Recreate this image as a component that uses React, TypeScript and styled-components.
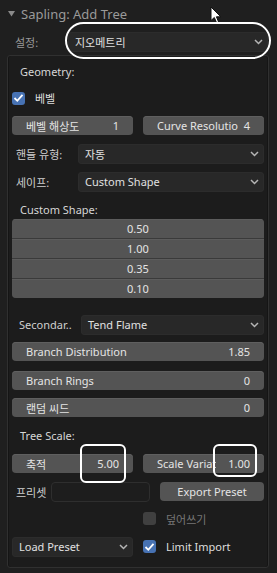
import React from 'react';
import styled, { createGlobalStyle } from 'styled-components';

const GlobalStyle = createGlobalStyle`
  html, body {
    margin: 0;
    padding: 0;
    background: #1d1d1d;
  }
  body {
    font-family: 'Noto Sans', 'Noto Sans CJK KR', sans-serif;
    font-size: 11px;
    color: #d9d9d9;
  }
`;

const Panel = styled.div`
  position: relative;
  width: 277px;
  height: 573px;
  background: #1f1f1f;
  overflow: hidden;
`;

const Header = styled.div`
  align-items: center;
  color: #9a9a9a;
  display: flex;
  font-size: 13px;
  gap: 6px;
  height: 27px;
  padding-left: 8px;
`;

const Cursor = styled.svg`
  left: 210px;
  position: absolute;
  top: 6px;
`;

const SettingsRow = styled.div`
  align-items: center;
  display: flex;
  height: 20px;
  margin-top: 5px;
  padding-right: 9px;
`;

const SettingsLabel = styled.div`
  color: #9a9a9a;
  padding-left: 15px;
  width: 53px;
`;

const Annotated = styled.div`
  flex: 1;
  position: relative;
`;

const Ellipse = styled.div`
  border: 2px solid #fff;
  border-radius: 19px;
  bottom: -7px;
  left: -3px;
  position: absolute;
  right: -3px;
  top: -10px;
  pointer-events: none;
`;

const Box = styled.div`
  background: #1c1c1c;
  border: 1px solid #303030;
  border-radius: 3px;
  box-shadow: inset 1px 0 0 #151515, inset -1px 0 0 #151515;
  display: flex;
  flex-direction: column;
  height: 506px;
  margin: 3px 8px 0 7px;
  padding: 5px 4px 0 4px;
`;

const SectionLabel = styled.div<{ $top?: number }>`
  align-items: center;
  color: #d6d6d6;
  display: flex;
  height: 20px;
  margin-top: ${(p) => p.$top ?? 0}px;
  padding-left: 8px;
`;

const Row = styled.div<{ $top?: number }>`
  align-items: center;
  display: flex;
  gap: 10px;
  height: 19px;
  margin-top: ${(p) => p.$top ?? 0}px;
`;

const CheckRow = styled.div<{ $top?: number; $muted?: boolean }>`
  align-items: center;
  color: ${(p) => (p.$muted ? '#777' : '#dedede')};
  display: flex;
  gap: 10px;
  height: 20px;
  margin-top: ${(p) => p.$top ?? 0}px;
`;

const Check = styled.div<{ $on: boolean }>`
  align-items: center;
  background: ${(p) => (p.$on ? '#4772b3' : '#4a4a4a')};
  border-radius: 3px;
  display: flex;
  height: 13px;
  justify-content: center;
  opacity: ${(p) => (p.$on ? 1 : 0.8)};
  width: 13px;
`;

const NumField = styled.div`
  align-items: center;
  background: #545454;
  border-radius: 4px;
  box-shadow: inset 0 1px 0 #5f5f5f;
  color: #e4e4e4;
  display: flex;
  flex: 1;
  gap: 4px;
  height: 19px;
  justify-content: space-between;
  min-width: 0;
  padding: 0 14px;
  position: relative;
  white-space: nowrap;
`;

const FieldText = styled.span`
  overflow: hidden;
`;

const Mark = styled.div<{ $w: number; $bottom: number }>`
  border: 2px solid #fff;
  border-radius: 6px;
  bottom: ${(p) => p.$bottom}px;
  pointer-events: none;
  position: absolute;
  right: 7px;
  top: -10px;
  width: ${(p) => p.$w}px;
`;

const PropLabel = styled.div<{ $w?: number; $pad?: number }>`
  color: #cfcfcf;
  flex-shrink: 0;
  padding-left: ${(p) => p.$pad ?? 4}px;
  white-space: nowrap;
  width: ${(p) => p.$w ?? 52}px;
`;

const Dropdown = styled.div`
  align-items: center;
  background: #282828;
  border-radius: 4px;
  box-shadow: inset 0 0 0 1px #2c2c2c;
  color: #e0e0e0;
  display: flex;
  flex: 1;
  height: 20px;
  justify-content: space-between;
  padding: 0 5px 0 7px;
`;

const Stack = styled.div`
  border-radius: 4px;
  display: flex;
  flex-direction: column;
  gap: 1px;
  background: #3a3a3a;
  overflow: hidden;
`;

const StackCell = styled.div`
  align-items: center;
  background: #545454;
  box-shadow: inset 0 1px 0 #5c5c5c;
  color: #e4e4e4;
  display: flex;
  height: 19px;
  justify-content: center;
`;

const PresetRow = styled.div`
  align-items: center;
  display: flex;
  height: 19px;
  margin-top: 9px;
`;

const TextField = styled.div`
  background: #1d1d1d;
  border: 1px solid #2e2e2e;
  border-radius: 4px;
  height: 18px;
  width: 97px;
`;

const Button = styled.div`
  align-items: center;
  background: #545454;
  border-radius: 4px;
  color: #e4e4e4;
  display: flex;
  height: 19px;
  justify-content: center;
  margin-left: auto;
  width: 104px;
`;

const Half = styled.div`
  display: flex;
  flex: 1;
`;

const Chevron = () => (
  <svg width="9" height="6" viewBox="0 0 9 6">
    <path d="M1 1 L4.5 4.5 L8 1" fill="none" stroke="#b5b5b5" strokeWidth="1.5" />
  </svg>
);

const Tick = () => (
  <svg width="11" height="10" viewBox="0 0 11 10">
    <path d="M1.5 5 L4.3 7.8 L9.5 1.8" fill="none" stroke="#fff" strokeWidth="1.8" />
  </svg>
);

const App: React.FC = () => (
  <>
    <GlobalStyle />
    <Panel>
      <Header>
        <svg width="7" height="6" viewBox="0 0 7 6">
          <path d="M0 0 H7 L3.5 5.5 Z" fill="#8a8a8a" />
        </svg>
        <span>Sapling: Add Tree</span>
      </Header>
      <Cursor width="12" height="18" viewBox="0 0 12 18">
        <path d="M1 1 L1 14.5 L4.3 11.5 L6.6 16.8 L8.6 15.9 L6.4 10.8 L10.8 10.8 Z" fill="#fff" stroke="#111" strokeWidth="1" />
      </Cursor>

      <SettingsRow>
        <SettingsLabel>설정:</SettingsLabel>
        <Annotated>
          <Dropdown>
            <span>지오메트리</span>
            <Chevron />
          </Dropdown>
          <Ellipse />
        </Annotated>
      </SettingsRow>

      <Box>
        <SectionLabel>Geometry:</SectionLabel>
        <CheckRow $top={7}>
          <Check $on>
            <Tick />
          </Check>
          <span>베벨</span>
        </CheckRow>
        <Row $top={8}>
          <NumField>
            <FieldText>베벨 해상도</FieldText>
            <span>1</span>
          </NumField>
          <NumField>
            <FieldText>Curve Resolutio</FieldText>
            <span>4</span>
          </NumField>
        </Row>
        <Row $top={9}>
          <PropLabel>핸들 유형:</PropLabel>
          <Dropdown>
            <span>자동</span>
            <Chevron />
          </Dropdown>
        </Row>
        <Row $top={9}>
          <PropLabel>세이프:</PropLabel>
          <Dropdown>
            <span>Custom Shape</span>
            <Chevron />
          </Dropdown>
        </Row>
        <SectionLabel $top={8}>Custom Shape:</SectionLabel>
        <Stack>
          <StackCell>0.50</StackCell>
          <StackCell>1.00</StackCell>
          <StackCell>0.35</StackCell>
          <StackCell>0.10</StackCell>
        </Stack>
        <Row $top={17}>
          <PropLabel $pad={7}>Secondar..</PropLabel>
          <Dropdown>
            <span>Tend Flame</span>
            <Chevron />
          </Dropdown>
        </Row>
        <Row $top={8}>
          <NumField>
            <span>Branch Distribution</span>
            <span>1.85</span>
          </NumField>
        </Row>
        <Row $top={10}>
          <NumField>
            <span>Branch Rings</span>
            <span>0</span>
          </NumField>
        </Row>
        <Row $top={8}>
          <NumField>
            <span>랜덤 씨드</span>
            <span>0</span>
          </NumField>
        </Row>
        <SectionLabel $top={8}>Tree Scale:</SectionLabel>
        <Row $top={9}>
          <NumField>
            <span>축적</span>
            <span>5.00</span>
            <Mark $w={42} $bottom={-10} />
          </NumField>
          <NumField>
            <FieldText>Scale Variat</FieldText>
            <span>1.00</span>
            <Mark $w={40} $bottom={-4} />
          </NumField>
        </Row>
        <PresetRow>
          <PropLabel $w={35}>프리셋</PropLabel>
          <TextField />
          <Button>Export Preset</Button>
        </PresetRow>
        <Row $top={8}>
          <Half />
          <Half>
            <CheckRow $muted>
              <Check $on={false} />
              <span>덮어쓰기</span>
            </CheckRow>
          </Half>
        </Row>
        <Row $top={9}>
          <Half>
            <Dropdown>
              <span>Load Preset</span>
              <Chevron />
            </Dropdown>
          </Half>
          <Half>
            <CheckRow>
              <Check $on>
                <Tick />
              </Check>
              <span>Limit Import</span>
            </CheckRow>
          </Half>
        </Row>
      </Box>
    </Panel>
  </>
);

export default App;
